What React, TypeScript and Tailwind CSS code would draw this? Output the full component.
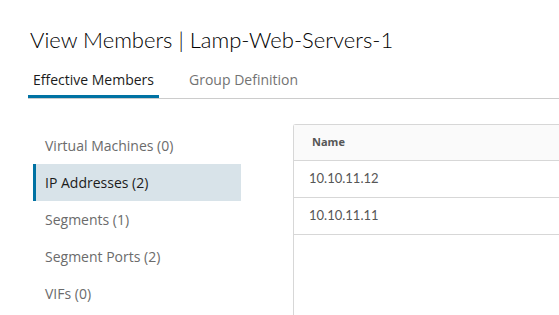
const navItems = [
  { label: "Virtual Machines (0)", active: false },
  { label: "IP Addresses (2)", active: true },
  { label: "Segments (1)", active: false },
  { label: "Segment Ports (2)", active: false },
  { label: "VIFs (0)", active: false },
];

const rows = ["10.10.11.12", "10.10.11.11"];

export default function App() {
  return (
    <main
      className="h-[315px] w-[559px] overflow-hidden bg-white"
      style={{ fontFamily: "'Open Sans', Lato, sans-serif" }}>
      <h1
        className="pl-[30px] pt-[25px] text-[22px] font-light leading-[30px] text-black"
        style={{ fontFamily: "Lato, sans-serif" }}>
        View Members | Lamp-Web-Servers-1
      </h1>
      <nav className="ml-[28px] mt-[14px] flex items-end gap-[30px] border-b border-[#cccccc] text-[14px]">
        <button className="border-b-[3px] border-[#0072a3] px-[5px] pb-[5px] text-[#1b1b1b]">
          Effective Members
        </button>
        <button className="border-b-[3px] border-transparent pb-[5px] text-[#737373]">
          Group Definition
        </button>
      </nav>
      <div className="mt-[25px] flex">
        <ul className="ml-[33px] mt-[3px] w-[208px] text-[14px]">
          {navItems.map((item) => (
            <li
              key={item.label}
              className={
                item.active
                  ? "flex h-[37px] items-center border-l-[3px] border-[#0072a3] bg-[#d8e3e9] pl-[9px] text-[#1b1b1b]"
                  : "flex h-[37px] items-center pl-[12px] text-[#6b6b6b]"
              }>
              {item.label}
            </li>
          ))}
        </ul>
        <div className="ml-[52px] h-[200px] flex-1 rounded-tl-[3px] border-l border-t border-[#d7d7d7]">
          <div className="flex h-[36px] items-center border-b border-[#d7d7d7] bg-[#fafafa] pl-[18px] text-[11px] font-bold text-[#565656]">
            Name
          </div>
          {rows.map((ip) => (
            <div
              key={ip}
              className="flex h-[37px] items-center border-b border-[#d7d7d7] pl-[15px] text-[13px] text-[#565656]"
              style={{ fontFamily: "Lato, sans-serif" }}>
              {ip}
            </div>
          ))}
        </div>
      </div>
    </main>
  );
}
